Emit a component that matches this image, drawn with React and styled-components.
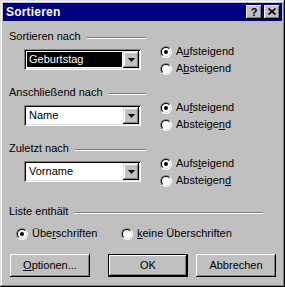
import React from "react";
import styled, { createGlobalStyle } from "styled-components";

const GlobalStyle = createGlobalStyle`
  body {
    margin: 0;
    background: #c0c0c0;
    font-family: "Liberation Sans", Arial, sans-serif;
    font-size: 11px;
  }
`;

const Dialog = styled.div`
  width: 285px;
  height: 287px;
  box-sizing: border-box;
  padding: 3px;
  background: #c0c0c0;
  box-shadow: inset -1px -1px #000000, inset 1px 1px #dfdfdf,
    inset -2px -2px #808080, inset 2px 2px #ffffff;
  display: flex;
  flex-direction: column;
  color: #000000;
`;

const TitleBar = styled.div`
  height: 18px;
  background: #000080;
  display: flex;
  align-items: center;
  padding: 0 2px 0 3px;
`;

const TitleText = styled.span`
  flex: 1;
  color: #ffffff;
  font-weight: bold;
  font-size: 12px;
  letter-spacing: 0.2px;
`;

const CaptionButton = styled.div`
  width: 16px;
  height: 14px;
  box-sizing: border-box;
  margin-left: ${(p) => (p.$gap ? "2px" : "0")};
  background: #c0c0c0;
  box-shadow: inset -1px -1px #000000, inset 1px 1px #ffffff,
    inset -2px -2px #808080;
  display: flex;
  align-items: center;
  justify-content: center;
  font-weight: bold;
  font-size: 11px;
  line-height: 14px;
  padding-bottom: 1px;
`;

const Body = styled.div`
  display: flex;
  flex-direction: column;
  padding: 9px 0 0 6px;
`;

const Section = styled.div`
  display: flex;
  margin-top: ${(p) => p.$top || 0}px;
`;

const LeftCol = styled.div`
  width: ${(p) => p.$width || 137}px;
  display: flex;
  flex-direction: column;
`;

const Header = styled.div`
  height: 13px;
  display: flex;
  align-items: center;
  line-height: 13px;
  white-space: nowrap;
`;

const Rule = styled.div`
  flex: 1;
  height: 0;
  margin: 3px 0 0 6px;
  border-top: 1px solid #808080;
  border-bottom: 1px solid #ffffff;
`;

const Combo = styled.div`
  width: 117px;
  height: 21px;
  box-sizing: border-box;
  margin: 6px 0 0 15px;
  padding: 2px;
  background: #ffffff;
  box-shadow: inset 1px 1px #808080, inset -1px -1px #ffffff,
    inset 2px 2px #000000, inset -2px -2px #dfdfdf;
  display: flex;
`;

const ComboField = styled.div`
  flex: 1;
  margin: 1px;
  padding-left: 2px;
  background: ${(p) => (p.$selected ? "#000000" : "#ffffff")};
  color: ${(p) => (p.$selected ? "#ffffff" : "#000000")};
  line-height: 15px;
  white-space: nowrap;
  overflow: hidden;
`;

const DropButton = styled.div`
  width: 16px;
  background: #c0c0c0;
  box-shadow: inset -1px -1px #000000, inset 1px 1px #dfdfdf,
    inset -2px -2px #808080, inset 2px 2px #ffffff;
  display: flex;
  align-items: center;
  justify-content: center;
`;

const RadioCol = styled.div`
  display: flex;
  flex-direction: column;
  gap: 4px;
  margin-left: 14px;
  padding-top: 15px;
`;

const RadioRow = styled.div`
  display: flex;
  flex-direction: row;
  align-items: center;
  height: 13px;
  line-height: 13px;
  white-space: nowrap;
  width: ${(p) => (p.$width ? `${p.$width}px` : "auto")};
`;

const RadioOuter = styled.span`
  width: 12px;
  height: 12px;
  box-sizing: border-box;
  border-radius: 50%;
  border: 1px solid;
  border-color: #808080 #ffffff #ffffff #808080;
  margin-right: 4px;
  flex: none;
  display: flex;
`;

const RadioInner = styled.span`
  flex: 1;
  border-radius: 50%;
  border: 1px solid;
  border-color: #000000 #dfdfdf #dfdfdf #000000;
  background: #ffffff;
  display: flex;
  align-items: center;
  justify-content: center;
`;

const Dot = styled.span`
  width: 4px;
  height: 4px;
  border-radius: 50%;
  background: #000000;
`;

const Key = styled.span`
  text-decoration: underline;
  text-underline-offset: 1px;
`;

const OptionRow = styled.div`
  display: flex;
  margin: 9px 0 0 7px;
`;

const ButtonRow = styled.div`
  display: flex;
  margin-top: 14px;
  padding-left: 1px;
`;

const Button = styled.div`
  width: 80px;
  height: 23px;
  box-sizing: border-box;
  margin-left: ${(p) => p.$left || 0}px;
  background: #c0c0c0;
  box-shadow: ${(p) =>
    p.$default
      ? "inset 0 0 0 1px #000000, inset -2px -2px #000000, inset 2px 2px #ffffff, inset -3px -3px #808080"
      : "inset -1px -1px #000000, inset 1px 1px #ffffff, inset -2px -2px #808080"};
  display: flex;
  align-items: center;
  justify-content: center;
  line-height: 13px;
`;

const Arrow = () => (
  <svg width="7" height="4" viewBox="0 0 7 4">
    <path d="M0 0h7L3.5 4z" fill="#000" />
  </svg>
);

const CloseGlyph = () => (
  <svg width="8" height="7" viewBox="0 0 8 7">
    <path d="M0.5 0.5L7.5 6.5M7.5 0.5L0.5 6.5" stroke="#000" strokeWidth="1.6" />
  </svg>
);

const Radio = ({ checked, children, width }) => (
  <RadioRow $width={width}>
    <RadioOuter>
      <RadioInner>{checked && <Dot />}</RadioInner>
    </RadioOuter>
    <span>{children}</span>
  </RadioRow>
);

const SortGroup = ({ label, value, selected, up, down, top }) => (
  <Section $top={top}>
    <LeftCol>
      <Header>
        {label}
        <Rule />
      </Header>
      <Combo>
        <ComboField $selected={selected}>{value}</ComboField>
        <DropButton>
          <Arrow />
        </DropButton>
      </Combo>
    </LeftCol>
    <RadioCol>
      <Radio checked>{up}</Radio>
      <Radio>{down}</Radio>
    </RadioCol>
  </Section>
);

export default function App() {
  return (
    <>
      <GlobalStyle />
      <Dialog>
        <TitleBar>
          <TitleText>Sortieren</TitleText>
          <CaptionButton>?</CaptionButton>
          <CaptionButton $gap>
            <CloseGlyph />
          </CaptionButton>
        </TitleBar>
        <Body>
          <SortGroup
            label="Sortieren nach"
            value="Geburtstag"
            selected
            up={<>A<Key>u</Key>fsteigend</>}
            down={<>A<Key>b</Key>steigend</>}
          />
          <SortGroup
            top={11}
            label="Anschließend nach"
            value="Name"
            up={<>Au<Key>f</Key>steigend</>}
            down={<>Absteige<Key>n</Key>d</>}
          />
          <SortGroup
            top={11}
            label="Zuletzt nach"
            value="Vorname"
            up={<>Aufs<Key>t</Key>eigend</>}
            down={<>Absteigen<Key>d</Key></>}
          />
          <Section $top={18}>
            <LeftCol $width={254}>
              <Header>
                Liste enthält
                <Rule />
              </Header>
              <OptionRow>
                <Radio checked width={105}>
                  Übe<Key>r</Key>schriften
                </Radio>
                <Radio>
                  <Key>k</Key>eine Überschriften
                </Radio>
              </OptionRow>
            </LeftCol>
          </Section>
          <ButtonRow>
            <Button>
              <span>
                <Key>O</Key>ptionen...
              </span>
            </Button>
            <Button $default $left={18}>
              OK
            </Button>
            <Button $left={8}>Abbrechen</Button>
          </ButtonRow>
        </Body>
      </Dialog>
    </>
  );
}
